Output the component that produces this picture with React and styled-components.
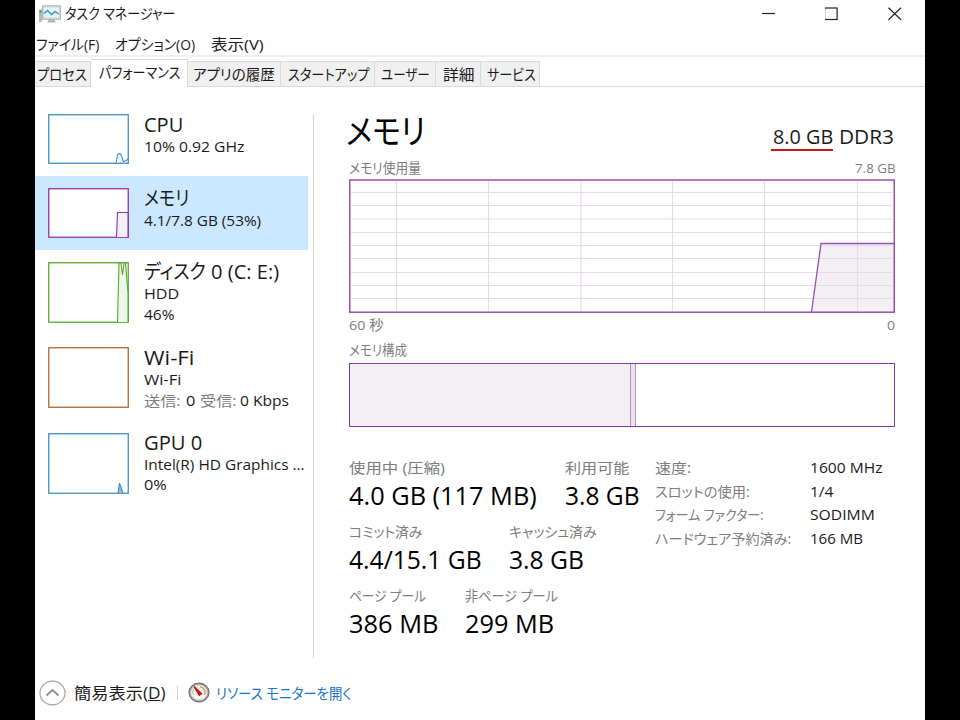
import React, { useLayoutEffect, useRef, useState } from 'react'
import styled, { createGlobalStyle, css } from 'styled-components'

const GlobalStyle = createGlobalStyle`
  * {
    box-sizing: border-box;
  }
  body {
    margin: 0;
    background: #000;
    overflow: hidden;
  }
`;

const Window = styled.div`
  width: 890px;
  height: 720px;
  margin: 0 auto;
  display: flex;
  flex-direction: column;
  background: #fff;
  color: #1a1a1a;
  font-family: "Open Sans", "Noto Sans CJK JP", sans-serif;
  font-feature-settings: "palt";
`;

const TextBox = styled.span`
  display: block;
  flex: none;
  width: ${p => p.$w}px;
  height: ${p => p.$h}px;
  line-height: ${p => p.$h}px;
  font-size: ${p => p.$size}px;
  color: ${p => p.$color || 'inherit'};
  margin-left: ${p => p.$ml || 0}px;
  white-space: pre;
`;

const TextInner = styled.span`
  display: inline-block;
  vertical-align: top;
  transform-origin: 0 50%;
`;

// Condenses or widens a label so that it takes exactly its column width
const Text = ({w, size = 14, h = 20, color, ml, children}) => {
  const ref = useRef(null)
  const [scale, setScale] = useState(1)

  useLayoutEffect(() => {
    setScale(w / ref.current.offsetWidth)
  }, [w, size, children])

  return (
    <TextBox $w={w} $h={h} $size={size} $color={color} $ml={ml}>
      <TextInner ref={ref} style={{transform: `scaleX(${scale})`}}>{children}</TextInner>
    </TextBox>
  )
}

const TitleBar = styled.div`
  height: 28px;
  padding: 0 23px 0 4px;
  display: flex;
  align-items: center;
`;

const Controls = styled.div`
  display: flex;
  gap: 49px;
  margin-left: auto;
`;

const Menu = styled.div`
  height: 29px;
  padding: 7px 0 0 1px;
  display: flex;
  border-bottom: 2px solid #f0f0f0;
`;

const Tabs = styled.div`
  height: 30px;
  display: flex;
  align-items: flex-end;
  border-bottom: 1px solid #dadada;
`;

const Tab = styled.div`
  width: ${p => p.$width}px;
  height: 25px;
  padding: 3px 0 0 ${p => p.$pad}px;
  background: #f0f0f0;
  border: 1px solid #dadada;
  border-left: 0;
  border-bottom: 0;
  ${p => p.$active && css`
    height: 28px;
    padding-top: 3px;
    background: #fff;
    margin-bottom: -1px;
  `}
`;

const Body = styled.div`
  height: 577px;
  display: flex;
`;

const Sidebar = styled.div`
  width: 273px;
  padding-top: 15px;
`;

const Device = styled.div`
  height: ${p => p.$height}px;
  padding: 12px 0 0 13px;
  display: flex;
  background: ${p => p.$selected ? '#cce8ff' : 'transparent'};
`;

const DeviceInfo = styled.div`
  margin-left: 15px;
`;

const Line = styled.div`
  display: flex;
`;

const Divider = styled.div`
  width: 1px;
  height: 544px;
  margin: 27px 0 0 5px;
  background: #d6d6d6;
`;

const Details = styled.div`
  width: 546px;
  margin-left: 35px;
  padding-top: 22px;
`;

const Row = styled.div`
  height: ${p => p.$height}px;
  display: flex;
  justify-content: space-between;
  align-items: ${p => p.$align || 'center'};
`;

const Installed = styled.div`
  display: flex;
  padding: 15px 1.5px 0 0;
`;

const Marked = styled.div`
  height: 27px;
  padding-left: 2px;
  border-bottom: 2px solid #c8161c;
`;

const Composition = styled.div`
  height: 64px;
  display: flex;
  border: 1px solid #8a3a9c;
`;

const InUse = styled.div`
  width: 280px;
  background: #f3f0f4;
`;

const Modified = styled.div`
  width: 6px;
  background: #ece2f0;
  border: solid #b48fc1;
  border-width: 0 1px;
`;

const Stats = styled.div`
  display: flex;
  padding-top: 31px;
`;

const StatGroup = styled.div`
  width: 306px;
`;

const StatRow = styled.div`
  height: 64px;
  display: flex;
`;

const Stat = styled.div`
  width: ${p => p.$width}px;
`;

const Specs = styled.div`
  display: grid;
  grid-template-columns: 154.5px 1fr;
  grid-auto-rows: 23.6px;
`;

const Footer = styled.div`
  height: 56px;
  padding: 2px 0 0 4px;
  display: flex;
  align-items: center;
`;

const FooterLine = styled.div`
  width: 1px;
  height: 14px;
  margin: 0 10px 0 11px;
  background: #cfcfcf;
`;

const Link = styled.div`
  margin-left: 6px;
  padding-top: 1px;
  color: #1673d1;
`;

const gray = '#7d7d7d'

const tabs = [
  {label: 'プロセス', width: 56, pad: 2, w: 49.5},
  {label: 'パフォーマンス', width: 97, pad: 8, w: 81.5, active: true},
  {label: 'アプリの履歴', width: 93, pad: 5, w: 82},
  {label: 'スタートアップ', width: 94, pad: 7, w: 81},
  {label: 'ユーザー', width: 61, pad: 6, w: 48.5},
  {label: '詳細', width: 45, pad: 7, w: 31.5},
  {label: 'サービス', width: 59, pad: 6, w: 48.5},
]

const Thumb = ({height, color, fill = 'none', path}) => (
  <svg width="81" height={height} viewBox={`0 0 81 ${height}`}>
    <rect x=".75" y=".75" width="79.5" height={height - 1.5} fill="#fff" stroke={color} strokeWidth="1.3" />
    {path && <path d={path} fill={fill} stroke={color} strokeWidth="1.1" />}
  </svg>
)

const columns = [47.5, 139.5, 232, 323.5, 415.5, 508.5]
const rows = [13.5, 26.5, 40, 53.5, 66.5, 79.5, 93.5, 106.5, 119.5]

const UsageChart = () => (
  <svg width="546" height="134" viewBox="0 0 546 134" display="block">
    <path d="M462.5 133 L472 64.5 H545 V133 Z" fill="#f3f0f4" />
    {columns.map(x => <path key={x} d={`M${x} 2 V132`} stroke="#e7dbea" strokeWidth="1.2" />)}
    {rows.map(y => <path key={y} d={`M2 ${y} H543`} stroke="#e7dbea" strokeWidth="1.2" />)}
    <path d="M462.5 133 L472 64.5 H545" fill="none" stroke="#9850ac" strokeWidth="1.3" />
    <rect x=".75" y="1" width="544.5" height="132.2" fill="none" stroke="#9345a6" strokeWidth="1.4" />
  </svg>
)

const AppIcon = () => (
  <svg width="23" height="18" viewBox="0 0 23 18">
    <rect x="0" y="4.500" width="3" height="12.500" fill="#b4b8b8" />
    <rect x=".5" y="5.500" width="2" height="2" fill="#3f9a3c" />
    <path d="M10 14.500 H15 L17 17.500 H8 Z" fill="#b0b3b5" />
    <rect x="3.500" y=".8" width="18" height="13.500" fill="#d3d7d9" stroke="#a4a9ac" strokeWidth=".8" />
    <rect x="5" y="2.500" width="15" height="10" fill="#e4f4fb" />
    <path d="M5 8.500 L8.500 5.500 L12.500 9.500 L16 6.500 L20 9" fill="none" stroke="#2b91c5" strokeWidth="1.3" />
  </svg>
)

const GaugeIcon = () => (
  <svg width="22" height="22" viewBox="0 0 22 22">
    <ellipse cx="11" cy="10.500" rx="10" ry="9.300" fill="#a9a9a6" stroke="#6f706d" strokeWidth="1.2" />
    <ellipse cx="11" cy="10.500" rx="8" ry="7.300" fill="#f7f6f1" stroke="#deded9" />
    <path d="M5.500 13 A6 5.500 0 0 1 9 5" fill="none" stroke="#b9c4b4" strokeWidth="1.2" />
    <path d="M12 5 A6 5.500 0 0 1 16.500 13" fill="none" stroke="#e59a62" strokeWidth="1.4" />
    <path d="M6 4.500 L13.600 11.800 L11.200 13.500 Z" fill="#c5161d" stroke="#c5161d" strokeWidth="1.2" />
  </svg>
)

const App = () => {
  return (
    <>
      <GlobalStyle />
      <Window>
        <TitleBar>
          <AppIcon />
          <Text w={110.5} size={14.5} ml={2.5}>タスク マネージャー</Text>
          <Controls>
            <svg width="14" height="14" viewBox="0 0 14 14"><path d="M0 6.500 H13" stroke="#222" strokeWidth="1.2" /></svg>
            <svg width="14" height="14" viewBox="0 0 14 14"><rect x="-.4" y="1" width="12.500" height="11.500" fill="none" stroke="#222" strokeWidth="1.2" overflow="visible" /></svg>
            <svg width="14" height="14" viewBox="0 0 14 14"><path d="M.5 .8 L13 12.800 M13 .8 L.5 12.800" stroke="#222" strokeWidth="1.2" /></svg>
          </Controls>
        </TitleBar>
        <Menu>
          <Text w={63} size={14.5}>ファイル(F)</Text>
          <Text w={80.5} size={14.5} ml={15.5}>オプション(O)</Text>
          <Text w={52.5} size={14.5} ml={15.5}>表示(V)</Text>
        </Menu>
        <Tabs>
          {tabs.map(t => (
            <Tab key={t.label} $width={t.width} $pad={t.pad} $active={t.active}>
              <Text w={t.w} size={14.5}>{t.label}</Text>
            </Tab>
          ))}
        </Tabs>

        <Body>
          <Sidebar>
            <Device $height={74}>
              <Thumb height={50} color="#3d8fc4" fill="#eff6fb" path="M68 49 L69.500 41 Q71 38.500 73 40.500 L75.500 47.500 Q78 48 80 44.500" />
              <DeviceInfo>
                <Text w={39} size={20} h={22}>CPU</Text>
                <Text w={100.5} size={14.5} h={22}>10% 0.92 GHz</Text>
              </DeviceInfo>
            </Device>
            <Device $height={74} $selected>
              <Thumb height={50} color="#8d34a8" fill="#f3f0f4" path="M68.500 49 L69.500 24.500 H80 V49" />
              <DeviceInfo>
                <Text w={45.5} size={20} h={21}>メモリ</Text>
                <Text w={117.5} size={14.5} h={23}>4.1/7.8 GB (53%)</Text>
              </DeviceInfo>
            </Device>
            <Device $height={85}>
              <Thumb height={61} color="#55aa30" fill="#edf6e9" path="M69.500 60 L71 1 H73 L74.500 13 L76 1 H77.500 L80 31 V60" />
              <DeviceInfo>
                <Line>
                  <Text w={62} size={20} h={20}>ディスク</Text>
                  <Text w={68} size={19.5} h={20} ml={4.5}>0 (C: E:)</Text>
                </Line>
                <Text w={35.5} size={14.5} h={24}>HDD</Text>
                <Text w={31} size={14.5} h={17}>46%</Text>
              </DeviceInfo>
            </Device>
            <Device $height={86}>
              <Thumb height={61} color="#ad672f" />
              <DeviceInfo>
                <Text w={50} size={20} h={21}>Wi-Fi</Text>
                <Text w={37.5} size={14.5} h={24}>Wi-Fi</Text>
                <Line>
                  <Text w={37} h={17} color={gray}>送信:</Text>
                  <Text w={9} size={14.5} h={17} ml={4.5}>0</Text>
                  <Text w={37} h={17} ml={5} color={gray}>受信:</Text>
                  <Text w={49.5} size={14.5} h={17} ml={3.5}>0 Kbps</Text>
                </Line>
              </DeviceInfo>
            </Device>
            <Device $height={86}>
              <Thumb height={61} color="#3d8fc4" fill="#8dbcdc" path="M70 60 L71.500 50 L75 60" />
              <DeviceInfo>
                <Text w={58.5} size={20} h={20}>GPU 0</Text>
                <Text w={160.5} size={14.5} h={23}>Intel(R) HD Graphics ...</Text>
                <Text w={22.5} size={14.5} h={18}>0%</Text>
              </DeviceInfo>
            </Device>
          </Sidebar>
          <Divider />
          <Details>
            <Row $height={48} $align="flex-start">
              <Text w={79.5} size={34} h={44} ml={-3}  color="#000">メモリ</Text>
              <Installed>
                <Marked>
                  <Text w={60} size={19.5} h={26}>8.0 GB</Text>
                </Marked>
                <Text w={54.5} size={19.5} h={26} ml={6}>DDR3</Text>
              </Installed>
            </Row>
            <Row $height={22}>
              <Text w={72} color={gray}>メモリ使用量</Text>
              <Text w={40.5} size={13.5} color={gray}>7.8 GB</Text>
            </Row>
            <UsageChart />
            <Row $height={24}>
              <Text w={34} size={13.5} color={gray}>60 秒</Text>
              <Text w={8.5} size={13.5} color={gray}>0</Text>
            </Row>
            <Row $height={26}>
              <Text w={58} color={gray}>メモリ構成</Text>
            </Row>
            <Composition>
              <InUse />
              <Modified />
            </Composition>
            <Stats>
              <StatGroup>
                <StatRow>
                  <Stat $width={215.5}>
                    <Text w={96} color={gray}>使用中 (圧縮)</Text>
                    <Text w={187.5} size={25} h={34} color="#000">4.0 GB (117 MB)</Text>
                  </Stat>
                  <Stat>
                    <Text w={64.5} color={gray}>利用可能</Text>
                    <Text w={74.5} size={25} h={34} color="#000">3.8 GB</Text>
                  </Stat>
                </StatRow>
                <StatRow>
                  <Stat $width={160}>
                    <Text w={73} color={gray}>コミット済み</Text>
                    <Text w={133} size={25} h={34} color="#000">4.4/15.1 GB</Text>
                  </Stat>
                  <Stat>
                    <Text w={87.5} color={gray}>キャッシュ済み</Text>
                    <Text w={75} size={25} h={34} color="#000">3.8 GB</Text>
                  </Stat>
                </StatRow>
                <StatRow>
                  <Stat $width={116}>
                    <Text w={77} color={gray}>ページ プール</Text>
                    <Text w={89.5} size={25} h={34} color="#000">386 MB</Text>
                  </Stat>
                  <Stat>
                    <Text w={93} color={gray}>非ページ プール</Text>
                    <Text w={89} size={25} h={34} color="#000">299 MB</Text>
                  </Stat>
                </StatRow>
              </StatGroup>
              <Specs>
                <Text w={36.5} color={gray}>速度:</Text>
                <Text w={72} size={14.5}>1600 MHz</Text>
                <Text w={94.5} color={gray}>スロットの使用:</Text>
                <Text w={23.5} size={14.5}>1/4</Text>
                <Text w={109} color={gray}>フォーム ファクター:</Text>
                <Text w={65} size={14.5}>SODIMM</Text>
                <Text w={136.5} color={gray}>ハードウェア予約済み:</Text>
                <Text w={53} size={14.5}>166 MB</Text>
              </Specs>
            </Stats>
          </Details>
        </Body>

        <Footer>
          <svg width="27" height="26" viewBox="0 0 27 26">
            <ellipse cx="13.500" cy="13" rx="12.500" ry="11.800" fill="none" stroke="#a3a3a3" strokeWidth="1.2" />
            <path d="M7.500 15.500 L13.500 10 L19.500 15.500" fill="none" stroke="#8e8e8e" strokeWidth="1.8" />
          </svg>
          <Text w={91.5} size={16} ml={8}>簡易表示(<u>D</u>)</Text>
          <FooterLine />
          <GaugeIcon />
          <Link>
            <Text w={135.5} size={14.5}>リソース モニターを開く</Text>
          </Link>
        </Footer>
      </Window>
    </>
  )
}

export default App
